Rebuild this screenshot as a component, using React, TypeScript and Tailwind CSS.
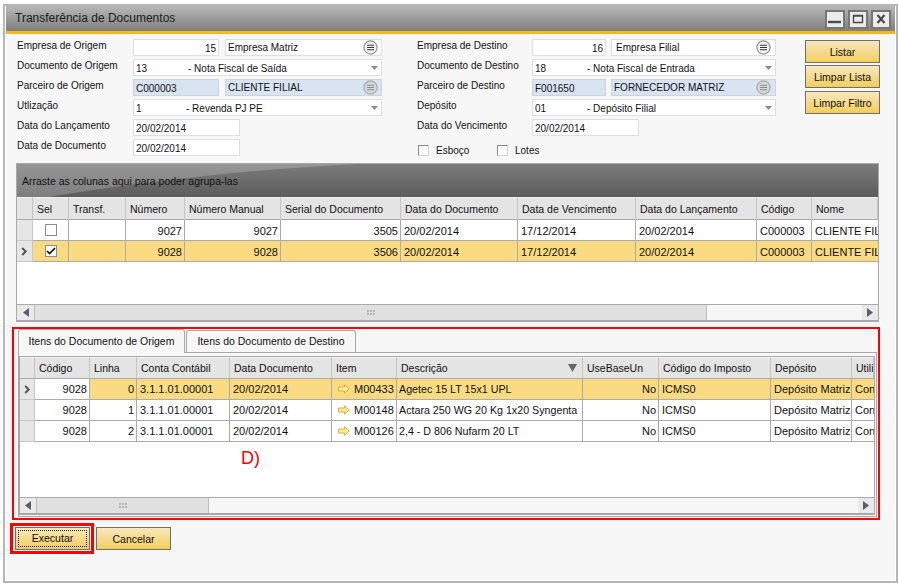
import React from "react";

const Lookup = ({ muted = false }: { muted?: boolean }) => (
  <svg width="15" height="15" viewBox="0 0 15 15" className="shrink-0">
    <circle cx="7.5" cy="7.5" r="6.6" fill={muted ? "#d4d8dd" : "#f4f4f4"} stroke={muted ? "#a8a8a8" : "#8f8f8f"} strokeWidth="1.2" />
    <path d="M4 5.2h7M4 7.5h7M4 9.8h7" stroke={muted ? "#8a8a8a" : "#333"} strokeWidth="1.1" />
  </svg>
);

const Caret = () => (
  <svg width="7" height="4" viewBox="0 0 7 4" className="shrink-0">
    <path d="M0 0h7L3.5 4z" fill="#8a8a8a" />
  </svg>
);

const Chevron = () => (
  <svg width="7" height="9" viewBox="0 0 7 9">
    <path d="M1.2 1l3.5 3.5L1.2 8" fill="none" stroke="#555" strokeWidth="2" />
  </svg>
);

const ItemArrow = () => (
  <svg width="12" height="10" viewBox="0 0 12 10" className="shrink-0">
    <path d="M.5 3h6V.8L11.3 5 6.5 9.2V7h-6z" fill="#f6eb9a" stroke="#d3b445" strokeWidth="1" />
  </svg>
);

const Label = ({ children, w }: { children: React.ReactNode; w: string }) => (
  <div className={`${w} shrink-0 pb-[4px] whitespace-nowrap`}>{children}</div>
);

const Field = ({
  className = "",
  children,
  blue = false,
}: {
  className?: string;
  children?: React.ReactNode;
  blue?: boolean;
}) => (
  <div
    className={`${className} h-[17px] flex items-center border whitespace-nowrap overflow-hidden ${
      blue ? "bg-[#d9e4f2] border-[#d0d3d6]" : "bg-white border-[#dcdfe3]"
    }`}
  >
    {children}
  </div>
);

const Select = ({ code, text, codeW = "w-[52px]" }: { code: string; text: string; codeW?: string }) => (
  <Field className="flex-1 pl-[2px] pr-[3px] pt-[1px]">
    <span className={`${codeW} shrink-0`}>{code}</span>
    <span className="flex-1">{text}</span>
    <Caret />
  </Field>
);

const Check = ({ label, className = "" }: { label: string; className?: string }) => (
  <div className={`flex items-center gap-[7px] ${className}`}>
    <div className="w-[11px] h-[11px] border border-t-[#8a8a8a] border-l-[#8a8a8a] border-r-[#d5d5d5] border-b-[#d5d5d5] bg-white" />
    <span>{label}</span>
  </div>
);

const YellowButton = ({ children, h, className = "" }: { children: React.ReactNode; h: string; className?: string }) => (
  <button
    className={`${h} w-[75px] ${className} border border-[#6f6f6f] pt-[1px] bg-gradient-to-b from-[#f8e8bb] to-[#f3cd58] text-[10.5px] text-[#111] flex items-center justify-center`}
  >
    {children}
  </button>
);

const Cell = ({
  children,
  right = false,
  className = "bg-white",
}: {
  children?: React.ReactNode;
  right?: boolean;
  className?: string;
}) => (
  <div
    className={`${className} h-[21px] min-w-0 text-[11px] border-r border-b border-[#ababab] flex items-center whitespace-nowrap overflow-hidden ${
      right ? "justify-end pr-[2px]" : "pl-[3px]"
    }`}
  >
    {children}
  </div>
);

const Head = ({ children, className = "" }: { children?: React.ReactNode; className?: string }) => (
  <div className={`${className} min-w-0 text-[10.5px] bg-[#e4e4e4] border-r border-b border-r-[#c4c4c4] border-b-[#ababab] border-t border-t-[#f2f2f2] flex items-center pl-[4px] whitespace-nowrap overflow-hidden`}>
    {children}
  </div>
);

const RowHead = ({ active = false }: { active?: boolean }) => (
  <div className="h-[21px] bg-[#e6e6e6] border-r border-b border-[#c8c8c8] flex items-center justify-center">
    {active && <Chevron />}
  </div>
);

const Scrollbar = ({ thumb, grip, buttonW }: { thumb: string; grip: string; buttonW: string }) => (
  <div className="h-[16px] flex bg-[#f6f6f6] border-t border-[#ababab]">
    <div className={`${buttonW} shrink-0 bg-[#e9e9e9] flex items-center justify-center`}>
      <svg width="6" height="9" viewBox="0 0 6 9">
        <path d="M6 0v9L0 4.5z" fill="#4f5f70" />
      </svg>
    </div>
    <div className={`${thumb} bg-[#e0e0e0] border-r border-l border-[#bdbdbd] flex items-center ${grip}`}>
      <div className="grid grid-cols-3 gap-[1px]">
        {[0, 1, 2, 3, 4, 5].map((i) => (
          <span key={i} className="w-[2px] h-[2px] bg-[#b5b5b5]" />
        ))}
      </div>
    </div>
    <div className="flex-1" />
    <div className="w-[16px] shrink-0 bg-[#e9e9e9] flex items-center justify-center">
      <svg width="6" height="9" viewBox="0 0 6 9">
        <path d="M0 0v9l6-4.5z" fill="#4f5f70" />
      </svg>
    </div>
  </div>
);

const Y = "bg-[#fbdb82]";

const topRows = [
  { sel: false, active: false, n: "9027", s: "3505", bg: "bg-white pt-[2px]" },
  { sel: true, active: true, n: "9028", s: "3506", bg: `${Y} pt-[2px]` },
];

const bottomRows = [
  { l: "0", item: "M00433", d: "Agetec 15 LT 15x1 UPL", bg: Y, active: true },
  { l: "1", item: "M00148", d: "Actara 250 WG 20 Kg 1x20 Syngenta", bg: "bg-white", active: false },
  { l: "2", item: "M00126", d: "2,4 - D 806 Nufarm 20 LT", bg: "bg-white", active: false },
];

export default function App() {
  return (
    <div className="w-[899px] h-[585px] bg-white pt-[4px] pl-[3px] font-['Liberation_Sans',Arial,sans-serif] text-[10px] leading-[13px] text-[#111] overflow-hidden">
      <div className="w-[895px] h-[579px] border-2 border-[#b7b7b7] px-px pb-px bg-white">
        <div className="w-full h-full bg-[#f7f7f7] flex flex-col">
          {/* title */}
          <div className="h-[25px] shrink-0 flex items-center justify-between pl-[9px] pr-[4px] bg-gradient-to-b from-[#b8b8b8] to-[#7f7f7f]">
            <span className="text-[12px] text-[#1c1c1c]">Transferência de Documentos</span>
            <div className="flex gap-[3px] pt-[1px]">
              {[0, 1, 2].map((i) => (
                <div key={i} className="w-[20px] h-[19px] border-2 border-[#777] bg-[#ececec] flex items-center justify-center">
                  <svg width="14" height="12" viewBox="0 0 14 12">
                    {i === 0 && <path d="M0 9h13" stroke="#4a4a4a" strokeWidth="2.4" />}
                    {i === 1 && <path d="M2.5 2.5h9v7h-9zM2.5 3h9" fill="none" stroke="#4a4a4a" strokeWidth="1.4" />}
                    {i === 2 && <path d="M3.5 2l7 8M10.5 2l-7 8" fill="none" stroke="#4a4a4a" strokeWidth="2.2" />}
                  </svg>
                </div>
              ))}
            </div>
          </div>
          <div className="h-[3px] shrink-0 bg-[#fbb713]" />

          {/* form */}
          <div className="flex pl-[11px] pt-[5px] h-[129px] shrink-0">
            <div className="w-[365px] flex flex-col gap-[3px]">
              <div className="flex items-center h-[17px]">
                <Label w="w-[116px]">Empresa de Origem</Label>
                <Field className="w-[86px] mr-[6px] justify-end pr-[2px] pt-[1px]">15</Field>
                <Field className="flex-1 pl-[2px] pr-[3px] justify-between">
                  <span>Empresa Matriz</span>
                  <Lookup />
                </Field>
              </div>
              <div className="flex items-center h-[17px]">
                <Label w="w-[116px]">Documento de Origem</Label>
                <Select code="13" text="- Nota Fiscal de Saída" />
              </div>
              <div className="flex items-center h-[17px]">
                <Label w="w-[116px]">Parceiro de Origem</Label>
                <Field blue className="w-[86px] mr-[6px] pl-[2px] pt-[1px]">C000003</Field>
                <Field blue className="flex-1 pl-[2px] pr-[3px] justify-between">
                  <span>CLIENTE FILIAL</span>
                  <Lookup muted />
                </Field>
              </div>
              <div className="flex items-center h-[17px]">
                <Label w="w-[116px]">Utlização</Label>
                <Select code="1" codeW="w-[50px]" text="- Revenda PJ PE" />
              </div>
              <div className="flex items-center h-[17px]">
                <Label w="w-[116px]">Data do Lançamento</Label>
                <Field className="w-[107px] pl-[2px] pt-[1px]">20/02/2014</Field>
              </div>
              <div className="flex items-center h-[17px]">
                <Label w="w-[116px]">Data de Documento</Label>
                <Field className="w-[107px] pl-[2px] pt-[1px]">20/02/2014</Field>
              </div>
            </div>

            <div className="w-[359px] ml-[35px] flex flex-col gap-[3px]">
              <div className="flex items-center h-[17px]">
                <Label w="w-[115px]">Empresa de Destino</Label>
                <Field className="w-[74px] mr-[5px] justify-end pr-[2px] pt-[1px]">16</Field>
                <Field className="flex-1 pl-[4px] pr-[4px] justify-between">
                  <span>Empresa Filial</span>
                  <Lookup />
                </Field>
              </div>
              <div className="flex items-center h-[17px]">
                <Label w="w-[115px]">Documento de Destino</Label>
                <Select code="18" text="- Nota Fiscal de Entrada" />
              </div>
              <div className="flex items-center h-[17px]">
                <Label w="w-[115px]">Parceiro de Destino</Label>
                <Field blue className="w-[74px] mr-[5px] pl-[2px] pt-[1px]">F001650</Field>
                <Field blue className="flex-1 pl-[2px] pr-[4px] justify-between">
                  <span>FORNECEDOR MATRIZ</span>
                  <Lookup muted />
                </Field>
              </div>
              <div className="flex items-center h-[17px]">
                <Label w="w-[115px]">Depósito</Label>
                <Select code="01" text="- Depósito Filial" />
              </div>
              <div className="flex items-center h-[17px]">
                <Label w="w-[115px]">Data do Vencimento</Label>
                <Field className="w-[107px] pl-[2px] pt-[1px]">20/02/2014</Field>
              </div>
              <div className="flex items-center h-[17px] pl-[1px] pt-[6px]">
                <Check label="Esboço" className="w-[79px]" />
                <Check label="Lotes" />
              </div>
            </div>

            <div className="ml-[29px] pt-[1px] flex flex-col">
              <YellowButton h="h-[23px]">Listar</YellowButton>
              <YellowButton h="h-[23px]" className="mt-[2px]">Limpar Lista</YellowButton>
              <YellowButton h="h-[23px]" className="mt-[3px]">Limpar Filtro</YellowButton>
            </div>
          </div>

          {/* top grid */}
          <div className="ml-[10px] w-[863px] h-[159px] shrink-0 border border-b-2 border-[#a9a9a9] flex flex-col bg-white">
            <div className="relative h-[33px] shrink-0 bg-gradient-to-b from-[#7c7c7c] to-[#5c5c5c] flex items-center pl-[5px] pt-[1px] text-[10.5px] text-[#111] overflow-hidden">
              <svg className="absolute inset-0" width="861" height="33" viewBox="0 0 861 33">
                <defs>
                  <linearGradient id="swoosh" x1="0" y1="0" x2="0" y2="1">
                    <stop offset="0" stopColor="#969696" />
                    <stop offset="1" stopColor="#7e7e7e" />
                  </linearGradient>
                </defs>
                <path d="M0 0h340C220 6 110 20 32 33H0z" fill="url(#swoosh)" />
              </svg>
              <span className="relative">Arraste as colunas aqui para poder agrupa-las</span>
            </div>
            <div className="grid grid-cols-[16px_36px_57px_59px_96px_120px_117px_118px_121px_55px_1fr] grid-rows-[23px_21px_21px] shrink-0">
              <Head />
              {[
                "Sel",
                "Transf.",
                "Número",
                "Número Manual",
                "Serial do Documento",
                "Data do Documento",
                "Data de Vencimento",
                "Data do Lançamento",
                "Código",
                "Nome",
              ].map((h) => (
                <Head key={h} className="pt-[2px]">{h}</Head>
              ))}
              {topRows.map((r) => (
                <React.Fragment key={r.n}>
                  <RowHead active={r.active} />
                  <Cell className={`${r.bg} justify-center !pl-0 !pt-0`}>
                    <div className="w-[12px] h-[12px] border border-[#8c8c8c] bg-white flex items-center justify-center">
                      {r.sel && (
                        <svg width="10" height="8" viewBox="0 0 10 8">
                          <path d="M1 4l2.6 2.6L9 1" fill="none" stroke="#111" strokeWidth="1.7" />
                        </svg>
                      )}
                    </div>
                  </Cell>
                  <Cell className={r.bg} />
                  <Cell right className={r.bg}>{r.n}</Cell>
                  <Cell right className={r.bg}>{r.n}</Cell>
                  <Cell right className={r.bg}>{r.s}</Cell>
                  <Cell className={r.bg}>20/02/2014</Cell>
                  <Cell className={r.bg}>17/12/2014</Cell>
                  <Cell className={r.bg}>20/02/2014</Cell>
                  <Cell className={r.bg}>C000003</Cell>
                  <Cell className={`${r.bg} !border-r-0`}>CLIENTE FILIAL</Cell>
                </React.Fragment>
              ))}
            </div>
            <div className="flex-1" />
            <Scrollbar buttonW="w-[17px]" thumb="w-[673px]" grip="pl-[332px]" />
          </div>

          {/* red annotated detail block */}
          <div className="ml-[6px] mt-[5px] w-[868px] h-[193px] shrink-0 border-2 border-[#f00] pl-[4px] pr-px flex flex-col">
            <div className="flex h-[23px] shrink-0 items-end text-[10.5px]">
              <div className="relative z-10 -mb-px w-[167px] h-[24px] border border-b-0 border-[#a8a8a8] rounded-t-[3px] bg-[#f7f7f7] flex items-center justify-center">
                Itens do Documento de Origem
              </div>
              <div className="ml-[1px] w-[170px] h-[22px] border border-b-0 border-[#a8a8a8] rounded-t-[3px] bg-[#f7f7f7] flex items-center justify-center">
                Itens do Documento de Destino
              </div>
            </div>
            <div className="h-[165px] w-[859px] shrink-0 border border-[#a8a8a8] pt-[3px] pr-px">
              <div className="h-[159px] border border-b-2 border-[#a9a9a9] flex flex-col bg-white relative">
                <div className="grid grid-cols-[15px_55px_47px_93px_102px_65px_186px_76px_112px_81px_1fr] grid-rows-[22px_21px_21px_21px] shrink-0">
                  <Head />
                  {["Código", "Linha", "Conta Contábil", "Data Documento", "Item"].map((h) => (
                    <Head key={h}>{h}</Head>
                  ))}
                  <Head>
                    <span className="flex-1">Descrição</span>
                    <svg width="9" height="8" viewBox="0 0 9 8" className="mr-[5px]">
                      <path d="M0 0h9L4.5 8z" fill="#666" />
                    </svg>
                  </Head>
                  {["UseBaseUn", "Código do Imposto", "Depósito", "Utilização"].map((h) => (
                    <Head key={h}>{h}</Head>
                  ))}
                  {bottomRows.map((r) => (
                    <React.Fragment key={r.l}>
                      <RowHead active={r.active} />
                      <Cell right>9028</Cell>
                      <Cell right className={r.bg}>{r.l}</Cell>
                      <Cell className={r.bg}>3.1.1.01.00001</Cell>
                      <Cell className={r.bg}>20/02/2014</Cell>
                      <Cell className={`${r.bg} !pl-[6px] gap-[4px]`}>
                        <ItemArrow />
                        {r.item}
                      </Cell>
                      <Cell className={`${r.bg} !pl-[2px] !text-[10.7px]`}>{r.d}</Cell>
                      <Cell right className={r.bg}>No</Cell>
                      <Cell className={r.bg}>ICMS0</Cell>
                      <Cell className={r.bg}>Depósito Matriz</Cell>
                      <Cell className={`${r.bg} !border-r-0`}>Consumo</Cell>
                    </React.Fragment>
                  ))}
                </div>
                <div className="flex-1" />
                <Scrollbar buttonW="w-[16px]" thumb="w-[173px]" grip="pl-[82px]" />
                <span className="absolute left-[221px] top-[90px] text-[18px] leading-[22px] text-[#f00]">D)</span>
              </div>
            </div>
          </div>

          {/* actions */}
          <div className="flex items-start ml-[4px] mt-[3px]">
            <div className="border-[3px] border-[#f00] pl-[2px] pr-px py-px">
              <button className="w-[75px] h-[23px] border border-[#6f6f6f] bg-gradient-to-b from-[#f8e8bb] to-[#f3cd58] text-[10.5px] text-[#111] p-[2px]">
                <span className="flex items-center justify-center w-full h-full border border-dotted border-[#222]">Executar</span>
              </button>
            </div>
            <YellowButton h="h-[23px]" className="ml-[2px] mt-[4px]">Cancelar</YellowButton>
          </div>
        </div>
      </div>
    </div>
  );
}
